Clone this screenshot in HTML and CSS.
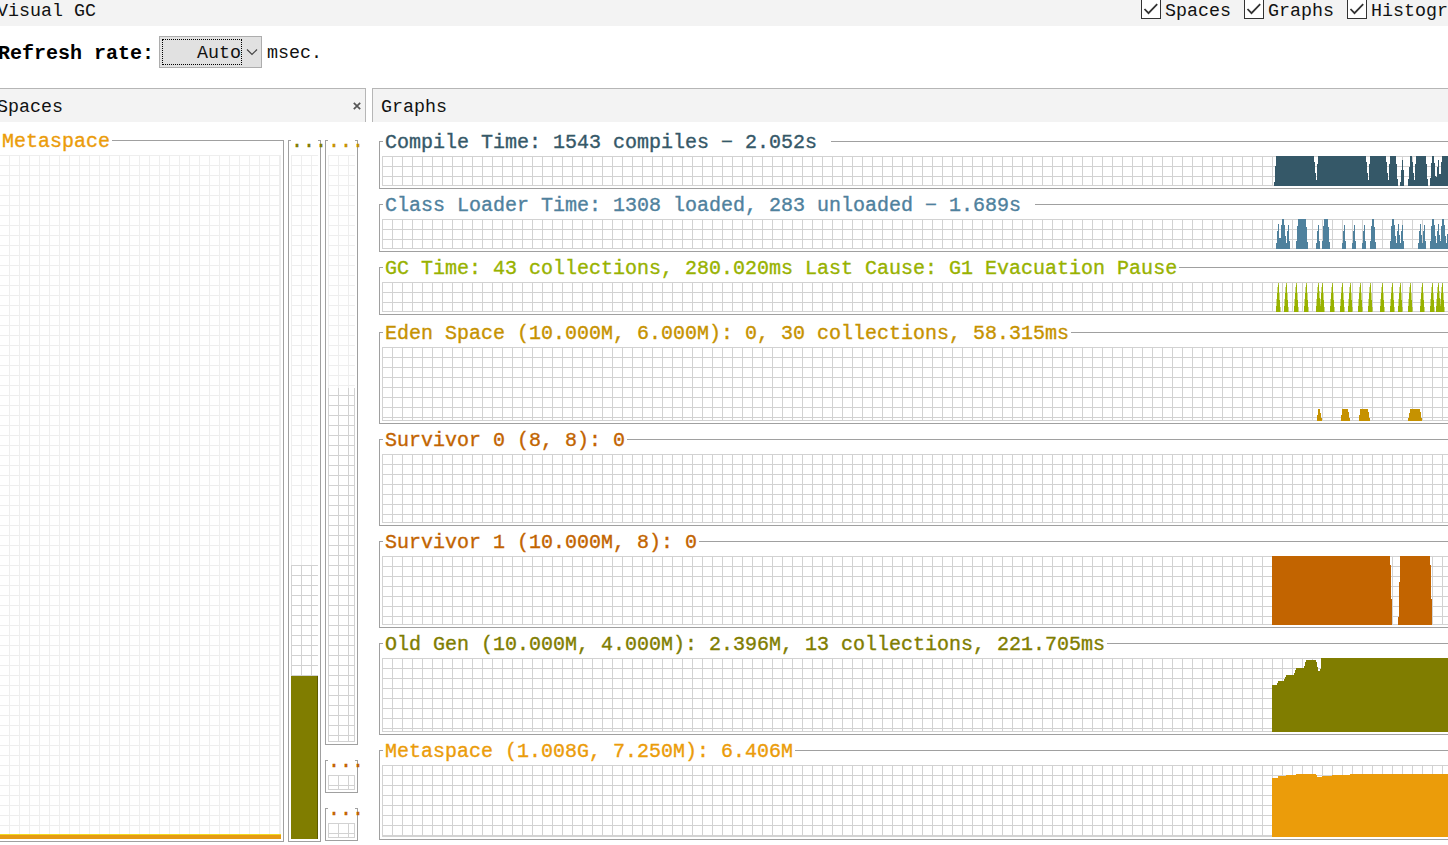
FILE: index.html
```html
<!DOCTYPE html>
<html lang="en">
<head>
<meta charset="utf-8">
<title>Visual GC</title>
<link rel="stylesheet" href="styles.css">
</head>
<body>
<header class="topbar">
  <span class="topbar-title">Visual GC</span>
  <div class="checks">
    <label class="check"><svg class="box" viewBox="0 0 20 20"><rect x=".5" y=".5" width="19" height="19"/><path d="M3.5 10l4 4.2 8.7-9"/></svg>Spaces</label>
    <label class="check"><svg class="box" viewBox="0 0 20 20"><rect x=".5" y=".5" width="19" height="19"/><path d="M3.5 10l4 4.2 8.7-9"/></svg>Graphs</label>
    <label class="check"><svg class="box" viewBox="0 0 20 20"><rect x=".5" y=".5" width="19" height="19"/><path d="M3.5 10l4 4.2 8.7-9"/></svg>Histogr</label>
  </div>
</header>
<div class="toolbar">
  <span class="rate-label">Refresh rate:</span>
  <div class="combo"><span class="combo-value">Auto</span><svg class="chevron" viewBox="0 0 12 8"><path d="M1 1.5l5 5 5-5"/></svg></div>
  <span class="unit">msec.</span>
</div>
<main class="main">
  <section class="spaces">
    <div class="tab tab-spaces"><span>Spaces</span><svg class="close" viewBox="0 0 8 8"><path d="M.8.8l6.4 6.4M7.2.8L.8 7.2"/></svg></div>
    <div class="spaces-body">
      <div class="group space-meta">
        <div class="title c-meta">Metaspace</div>
        <div class="plot grid-light"><div class="meta-fill"></div></div>
      </div>
      <div class="group space-old">
        <div class="title dots c-old">...</div>
        <div class="plot reserved grid-light"></div>
        <div class="plot committed grid-dark"></div>
        <div class="old-fill"></div>
      </div>
      <div class="young">
        <div class="group space-eden">
          <div class="title dots c-eden">...</div>
          <div class="plot reserved grid-light"></div>
          <div class="plot committed grid-dark"></div>
        </div>
        <div class="group space-survivor"><div class="title dots c-surv">...</div><div class="plot grid-dark end"></div></div>
        <div class="group space-survivor"><div class="title dots c-surv">...</div><div class="plot grid-dark end"></div></div>
      </div>
    </div>
  </section>
  <section class="graphs">
    <div class="tab tab-graphs"><span>Graphs</span></div>
    <div class="graphs-body">
      <div class="group graph h48">
        <div class="title trail c-compile">Compile Time: 1543 compiles − 2.052s</div>
        <div class="plot grid-dark end"><svg class="data c-compile" viewBox="42 78 528 90" preserveAspectRatio="none"><path d="M48 168V156H51V108H54V78H168L175 158 180 78H324L331 158 336 78H384L391 158 396 78H414L420 168zM426 168V156H429V120H432V90H435V120H438V168zM450 168L457 78H462L469 158 474 78H504L510 168zM516 168L522 78H528L534 158 541 84 546 150 552 78H570V168z"/></svg></div>
      </div>
      <div class="group graph h48">
        <div class="title trail c-class">Class Loader Time: 1308 loaded, 283 unloaded − 1.689s</div>
        <div class="plot grid-dark end"><svg class="data c-class" viewBox="42 267 528 90" preserveAspectRatio="none"><path d="M54 357L61 275 66 345 72 267H78L85 345 91 275 96 357zM114 357L120 267H144L150 357zM174 357L181 275 186 357zM192 357L198 267H210L216 357zM252 357L259 275 264 357zM282 357L289 275 294 357zM312 357L319 275 324 357zM336 357L342 267H348L354 357zM396 357L402 267H408L415 345 421 275 427 345 433 275 438 357zM480 357L487 275 493 345 499 275 504 357zM516 357L522 267H528L535 345 541 275 547 340 552 267H558L565 345 570 300V357z"/></svg></div>
      </div>
      <div class="group graph h48">
        <div class="title c-gc">GC Time: 43 collections, 280.020ms Last Cause: G1 Evacuation Pause</div>
        <div class="plot grid-dark end"><svg class="data c-gc" viewBox="42 456 528 90" preserveAspectRatio="none"><path d="M54 546l7-88 6 88zM78 546l7-88 6 88zM108 546l7-88 6 88zM138 546l7-88 6 88zM174 546l7-88 6 76 6-76 6 88zM216 546l7-88 6 88zM246 546l7-88 6 88zM270 546l7-88 6 88zM300 546l7-88 6 88zM330 546l7-88 6 88zM366 546l7-88 6 88zM396 546l7-88 6 88zM420 546l7-88 6 88zM450 546l7-88 6 88zM486 546l7-88 6 88zM516 546l7-88 6 88zM534 546l7-88 6 76 6-76 6 88z"/></svg></div>
      </div>
      <div class="group graph h92 after-times">
        <div class="title c-eden">Eden Space (10.000M, 6.000M): 0, 30 collections, 58.315ms</div>
        <div class="plot grid-dark end"><svg class="data c-eden" viewBox="42 81 528 222" preserveAspectRatio="none"><path d="M176 303L181 266H185L192 303zM248 303L253 267H270L276 303zM302 303L307 267H330L336 303zM450 303L457 267H486L492 303z"/></svg></div>
      </div>
      <div class="group graph h87">
        <div class="title c-surv">Survivor 0 (8, 8): 0</div>
        <div class="plot grid-dark end"></div>
      </div>
      <div class="group graph h87">
        <div class="title c-surv">Survivor 1 (10.000M, 8): 0</div>
        <div class="plot grid-dark end"><svg class="data c-surv" viewBox="42 78 528 207" preserveAspectRatio="none"><path d="M42 285V78H396V105H399V207H402V285zM420 285V262H423V156H426V78H516V105H519V207H522V285z"/></svg></div>
      </div>
      <div class="group graph h92">
        <div class="title c-old">Old Gen (10.000M, 4.000M): 2.396M, 13 collections, 221.705ms</div>
        <div class="plot grid-dark end"><svg class="data c-old" viewBox="42 384 528 222" preserveAspectRatio="none"><path d="M42 606V465H57V459H60V453H78V447H81V441H84V435H108V429H111V420H114V414H138V408H141V396H144V390H174V396H177V411H180V423H186V417H189V384H570V606z"/></svg></div>
      </div>
      <div class="group graph h90">
        <div class="title c-meta">Metaspace (1.008G, 7.250M): 6.406M</div>
        <div class="plot grid-dark end"><svg class="data c-meta" viewBox="42 90 528 216" preserveAspectRatio="none"><path d="M42 306V129H60V123H84V120H114V117H174V120H177V126H192V123H222V120H276V117H570V306z"/></svg></div>
      </div>
    </div>
  </section>
</main>
</body>
</html>
```
FILE: styles.css
```css
* { box-sizing: border-box; }

body {
  margin: 0;
  width: 1448px;
  height: 845px;
  overflow: hidden;
  background: #fff;
  color: #111;
  font-family: "Liberation Mono", monospace;
  font-size: 18.33px;
  line-height: 20px;
  white-space: nowrap;
}

/* Header */
.topbar {
  display: flex;
  justify-content: space-between;
  height: 26px;
  background: #f3f3f3;
}
.topbar-title { margin-left: -3px; margin-top: 2px; }
.checks { display: flex; gap: 13px; }
.check { display: flex; gap: 4px; height: 20px; margin-top: 2px; }
.box { width: 20px; height: 20px; margin-top: -3px; }
.box rect { fill: #fff; stroke: #333; }
.box path { fill: none; stroke: #333; stroke-width: 1.8; }

/* Refresh controls */
.toolbar {
  display: flex;
  align-items: center;
  height: 62px;
  padding-bottom: 10px;
}
.rate-label {
  width: 161px;
  margin-left: -2px;
  padding-top: 4px;
  font-size: 20px;
  font-weight: bold;
  color: #000;
}
.combo {
  display: flex;
  align-items: center;
  width: 103px;
  height: 32px;
  padding: 0 3px 0 2px;
  background: #e1e1e1;
  border: 1px solid #adadad;
}
.combo-value {
  width: 80px;
  height: 26px;
  padding-top: 4px;
  border: 1px dotted #000;
  text-align: right;
}
.chevron { width: 12px; height: 8px; margin-left: 4px; }
.chevron path { fill: none; stroke: #444; stroke-width: 1.2; }
.unit { margin-left: 5px; padding-top: 4px; }

/* Panels */
.main { display: flex; gap: 6px; height: 757px; }
.spaces { width: 366px; }
.graphs { width: 1076px; }
.tab {
  display: flex;
  justify-content: space-between;
  height: 34px;
  padding-top: 9px;
  background: #f3f3f3;
  border-top: 1px solid #b6b6b6;
}
.tab-spaces { padding-right: 4px; border-right: 1px solid #b6b6b6; }
.tab-spaces span { margin-left: -3px; }
.tab-graphs { padding-left: 8px; border-left: 1px solid #b6b6b6; }
.close { width: 8px; height: 8px; margin-top: 4px; }
.close path { stroke: #555; stroke-width: 1.7; }

/* Titled boxes */
.group {
  display: flex;
  flex-direction: column;
  padding: 0 2px 2px;
  border: 1px solid #a0a0a0;
}
.title {
  align-self: flex-start;
  height: 20px;
  margin: -9px 0 3px 1px;
  padding: 0 2px;
  background: #fff;
  font-size: 20px;
  -webkit-text-stroke: .35px currentColor;
}
.title.trail { padding-right: 14px; }
.title.dots { width: 27px; margin-left: 0; padding: 0; }
.plot { display: flex; justify-content: flex-end; flex: 1; min-height: 0; }
.grid-dark {
  background:
    repeating-linear-gradient(to right, #d2d2d2 0 1px, transparent 1px 10px),
    repeating-linear-gradient(to bottom, #d2d2d2 0 1px, transparent 1px 10px);
}
.grid-light {
  background:
    repeating-linear-gradient(to right, #eee 0 1px, transparent 1px 10px),
    repeating-linear-gradient(to bottom, #eee 0 1px, transparent 1px 10px);
}
.plot.end { box-shadow: inset 0 -1px #d2d2d2; }

/* Graph column */
.graphs-body { padding: 19px 0 0 7px; }
.graph { border-right: 0; padding-right: 0; margin-bottom: 15px; }
.after-times { margin-top: 17px; }
.h48 { height: 48px; }
.h48:nth-child(3) { margin-bottom: 0; }
.h87 { height: 87px; }
.h90 { height: 90px; }
.h92 { height: 92px; }
.data { width: 176px; height: 100%; fill: currentColor; shape-rendering: crispEdges; }
.data.c-gc { stroke: currentColor; stroke-width: 1.5px; }

/* Spaces column */
.spaces-body { display: flex; padding-top: 18px; }
.space-meta { width: 284px; height: 702px; border-left: 0; padding-left: 0; }
.space-meta .title { margin-left: 0; }
.space-meta .plot { align-items: flex-end; background-position: -1px 0; }
.meta-fill {
  width: 281px;
  height: 5px;
  background: #e59b14;
  border-top: 1px solid #f0d820;
}
.space-old { width: 33px; height: 702px; margin-left: 4px; }
.space-old .reserved { flex: 0 0 410px; }
.space-old .committed { flex: 0 0 111px; }
.old-fill { flex: 1; width: 27px; background: #807d00; border-right: 1px solid #5c5a00; }
.young { margin-left: 4px; }
.young .group { width: 33px; }
.space-eden { height: 605px; }
.space-eden .reserved { flex: 0 0 233px; }
/* Starts part-way through a cell, so the rows stay on the shared 10px pitch */
.space-eden .committed {
  background:
    repeating-linear-gradient(to right, #d2d2d2 0 1px, transparent 1px 10px),
    repeating-linear-gradient(to bottom, transparent 0 7px, #d2d2d2 7px 8px, transparent 8px 10px);
}
.space-eden .committed,
.space-survivor .plot { box-shadow: inset -1px -1px #d2d2d2; }
.space-survivor { height: 33px; margin-top: 15px; }

/* Series colours */
.c-compile { color: #355868; }
.c-class { color: #4f819d; }
.c-gc { color: #98b200; }
.c-eden { color: #c69200; }
.c-surv { color: #c26400; }
.c-old { color: #807d00; }
.c-meta { color: #eb9c0a; }
```
